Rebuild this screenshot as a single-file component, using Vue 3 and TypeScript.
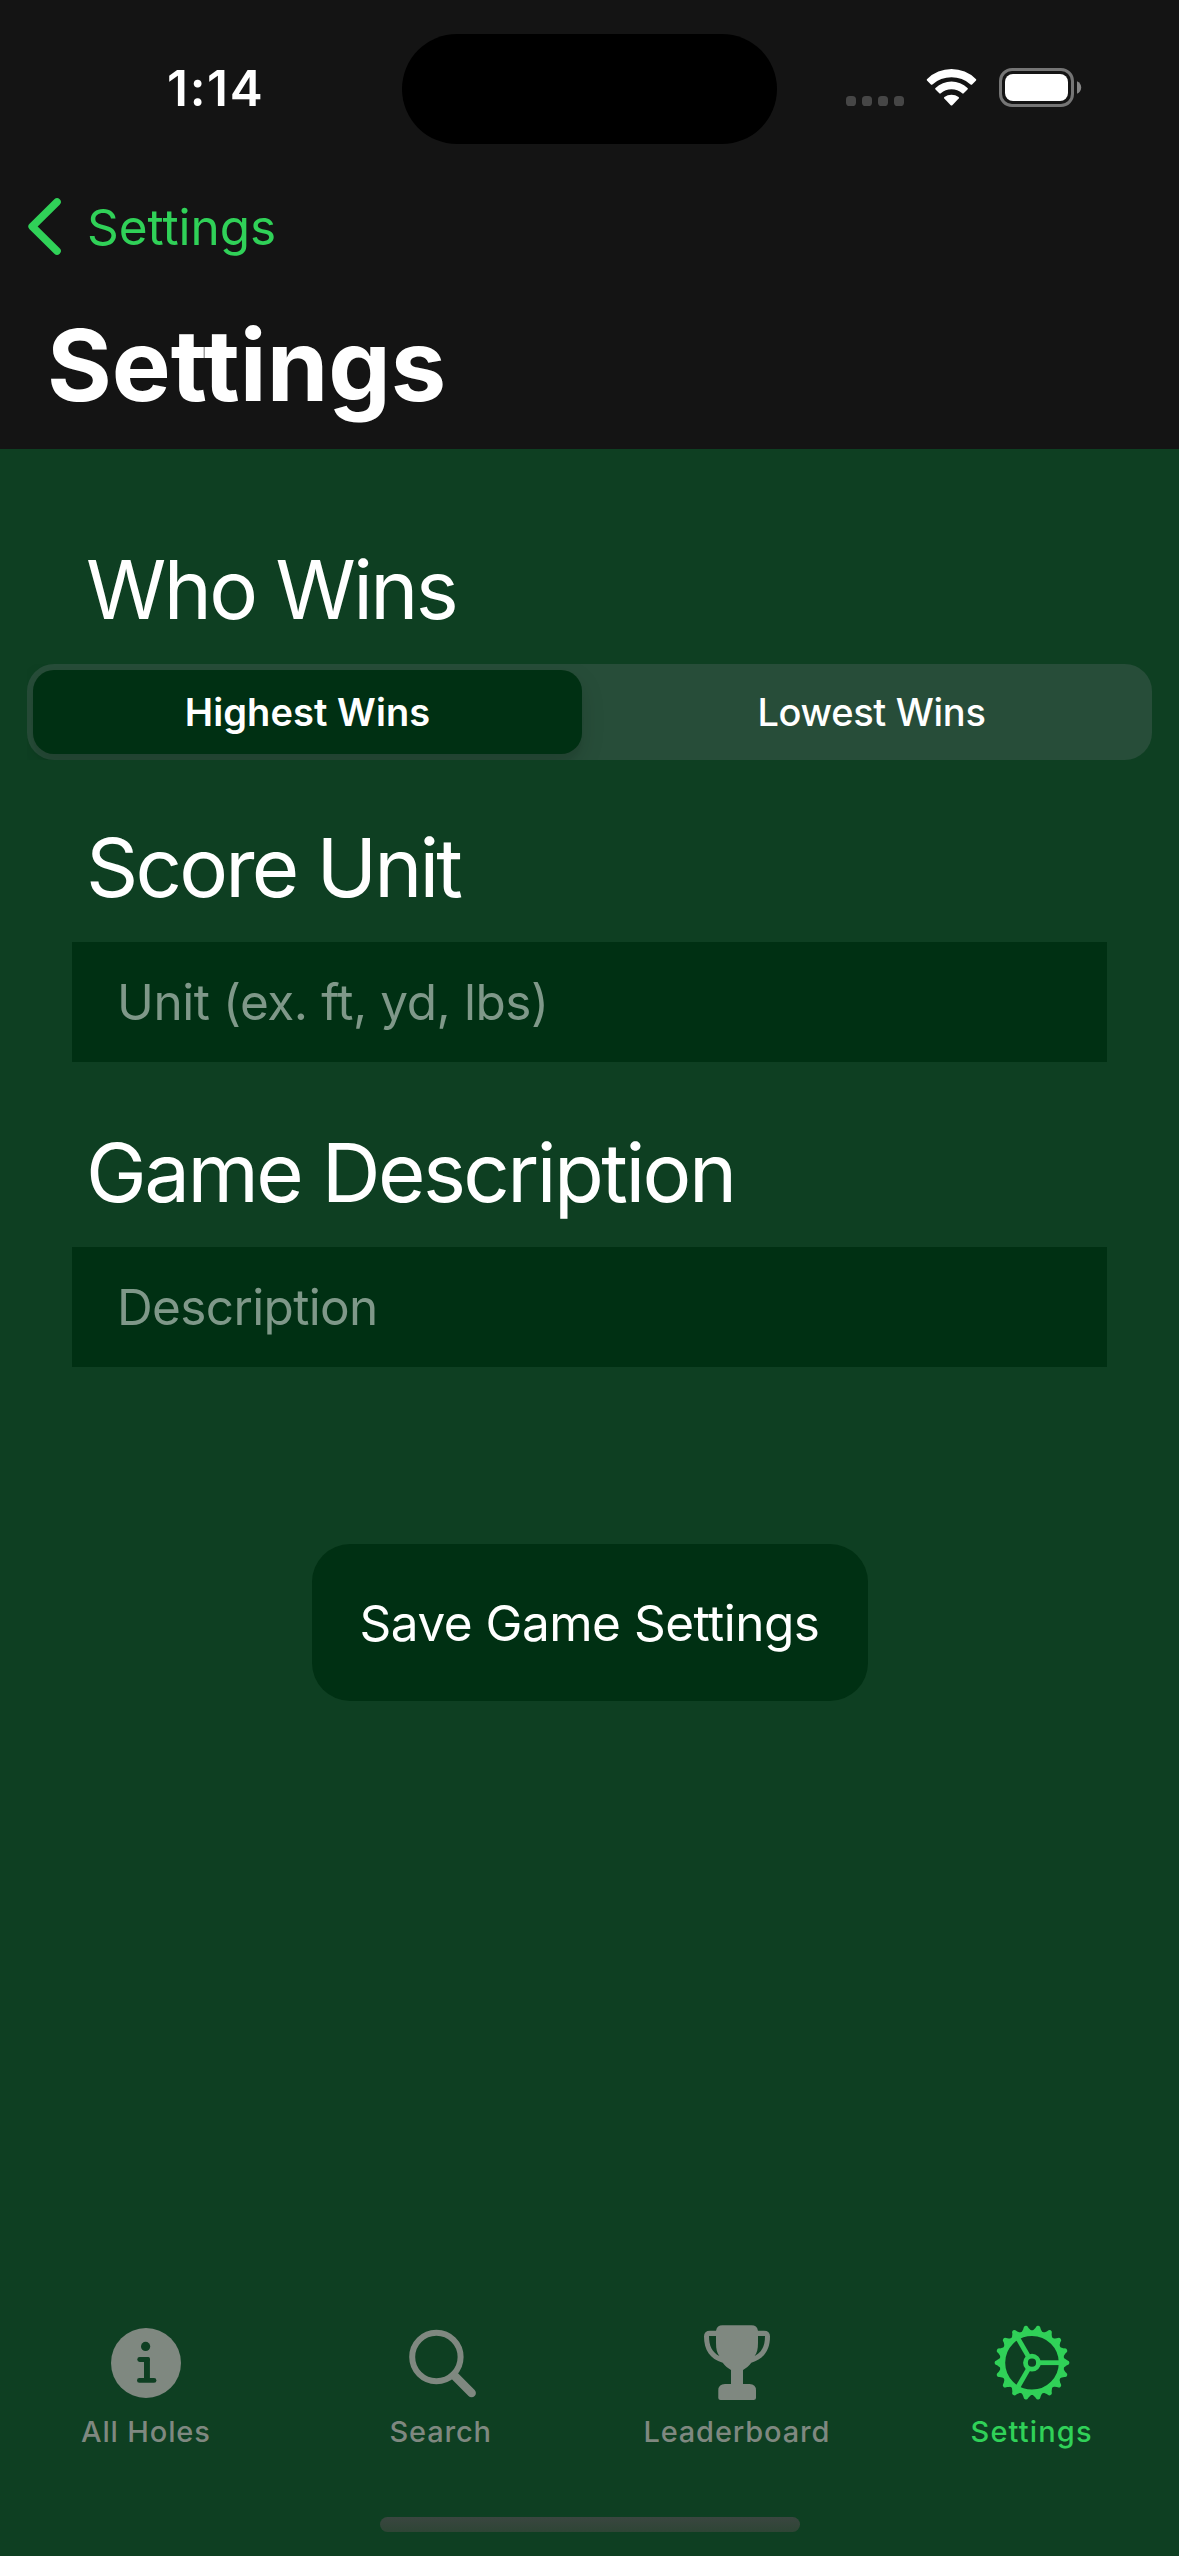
<script setup lang="ts">
import { ref } from 'vue'

interface Tab {
  id: 'info' | 'search' | 'trophy' | 'gear'
  label: string
}

const tabs: Tab[] = [
  { id: 'info', label: 'All Holes' },
  { id: 'search', label: 'Search' },
  { id: 'trophy', label: 'Leaderboard' },
  { id: 'gear', label: 'Settings' },
]
const winModes = ['Highest Wins', 'Lowest Wins']

const activeTab = ref<Tab['id']>('gear')
const winMode = ref(0)
const unit = ref('')
const description = ref('')

const teeth = Array.from({ length: 18 }, (_, i) => i * 20)
const spokes = [0, 120, 240]
</script>

<template>
  <div class="screen">
    <header class="header">
      <div class="status">
        <div class="clock">1:14</div>
        <div class="island"></div>
        <div class="indicators">
          <svg class="dots" width="58" height="40" viewBox="0 0 58 40">
            <rect v-for="n in 4" :key="n" :x="(n - 1) * 16" y="28" width="10" height="10" rx="3.6" />
          </svg>
          <svg class="wifi" width="51" height="40" viewBox="0 0 51 40">
            <path d="M1.2 12.7Q0.2 11.8 1.2 10.9A34.6 34.6 0 0 1 49.8 10.9Q50.8 11.8 49.8 12.7L46.1 16.4Q45.4 17.1 44.6 16.4A29 29 0 0 0 6.4 16.4Q5.6 17.1 4.9 16.4Z" />
            <path d="M9.5 21.6Q8.6 20.7 9.5 19.9A23.5 23.5 0 0 1 41.5 19.9Q42.4 20.7 41.5 21.6L37.7 25.3Q37 26 36.2 25.3A16.4 16.4 0 0 0 14.8 25.3Q14 26 13.3 25.3Z" />
            <path d="M18.3 30.6Q17.6 29.8 18.4 29.1A11.5 11.5 0 0 1 32.6 29.1Q33.4 29.8 32.7 30.6L26.3 37.2Q25.5 38 24.7 37.2Z" />
          </svg>
          <svg class="battery" width="83" height="40" viewBox="0 0 83 40">
            <rect x="1.5" y="1.5" width="72" height="36" rx="11.5" fill="none" stroke="#757575" stroke-width="3" />
            <rect x="6" y="6" width="63" height="27" rx="8" fill="#fff" />
            <path d="M78 13.2C80.6 14.3 82.2 16.6 82.2 19.5S80.6 24.7 78 25.8Z" fill="#858585" />
          </svg>
        </div>
      </div>
      <div class="nav">
        <svg class="chevron" width="36" height="60" viewBox="0 0 36 60">
          <path d="M30 5L5.2 29.5L30 54" />
        </svg>
        <span class="back">Settings</span>
      </div>
      <h1 class="title">Settings</h1>
    </header>

    <main class="form">
      <h2 class="heading who">Who Wins</h2>
      <div class="segmented">
        <div
          v-for="(mode, i) in winModes"
          :key="mode"
          class="segment"
          :class="{ selected: winMode === i }"
          @click="winMode = i"
        >
          {{ mode }}
        </div>
      </div>

      <h2 class="heading score">Score Unit</h2>
      <input v-model="unit" class="field unit" type="text" placeholder="Unit (ex. ft, yd, lbs)" />

      <h2 class="heading game">Game Description</h2>
      <input v-model="description" class="field" type="text" placeholder="Description" />

      <button class="save" type="button">Save Game Settings</button>
    </main>

    <footer class="footer">
      <nav class="tabs">
        <div
          v-for="tab in tabs"
          :key="tab.id"
          class="tab"
          :class="[tab.id, { active: tab.id === activeTab }]"
          @click="activeTab = tab.id"
        >
          <svg v-if="tab.id === 'info'" width="80" height="80" viewBox="0 0 80 80">
            <circle cx="40" cy="40" r="35" fill="currentColor" />
            <g class="cutout">
              <circle cx="39.6" cy="23.4" r="4.6" />
              <rect x="31.3" y="34" width="12.6" height="4.9" rx="2.4" />
              <path d="M38 34H41.6Q43.9 34 43.9 36.3V58H38Z" />
              <rect x="31" y="55" width="19.4" height="4.8" rx="2.4" />
            </g>
          </svg>
          <svg v-else-if="tab.id === 'search'" width="80" height="80" viewBox="0 0 80 80">
            <circle cx="35.4" cy="34" r="24.2" fill="none" stroke="currentColor" stroke-width="6" />
            <path d="M53.2 52.4L70.6 70" fill="none" stroke="currentColor" stroke-width="8.6" stroke-linecap="round" />
          </svg>
          <svg v-else-if="tab.id === 'trophy'" width="80" height="80" viewBox="0 0 80 80">
            <path
              fill="currentColor"
              fill-rule="evenodd"
              d="M19 7.7H13Q7 7.7 7 13.5C7 27 13 36 25.7 39.7C28 43 31 45 34 47V61H28Q21.3 61 21.3 67.5V75Q21.3 77 23.5 77H56.5Q59 77 59 75V67.5Q59 61 52.5 61H46V47C49 45 52 43 54.3 39.7C67 36 73 27 73 13.5Q73 7.7 67 7.7H61Q60 2.3 54.5 2.3H25.5Q20 2.3 19 7.7ZM12 13H19V20C19 26 20 30 22.3 33C15 29 12 23 12 13ZM68 13H61V20C61 26 60 30 57.7 33C65 29 68 23 68 13Z"
            />
          </svg>
          <svg v-else width="80" height="80" viewBox="-40 -39.7 80 80">
            <path
              v-for="a in teeth"
              :key="a"
              fill="currentColor"
              d="M30 -5.6C33 -4.6 34 -2.6 35.6 -2.3Q37.4 -1.8 37.4 0T35.6 2.3C34 2.6 33 4.6 30 5.6Z"
              :transform="`rotate(${a})`"
            />
            <circle r="29.6" fill="none" stroke="currentColor" stroke-width="5.6" />
            <circle r="6.5" fill="none" stroke="currentColor" stroke-width="4.8" />
            <path
              v-for="a in spokes"
              :key="'s' + a"
              d="M8 0H28"
              fill="none"
              stroke="currentColor"
              stroke-width="4.8"
              :transform="`rotate(${a})`"
            />
          </svg>
          <span class="label">{{ tab.label }}</span>
        </div>
      </nav>
      <div class="home"></div>
    </footer>
  </div>
</template>

<style>
body {
  margin: 0;
  background: #0e3f22;
}
</style>

<style scoped>
.screen {
  display: flex;
  flex-direction: column;
  width: 1179px;
  height: 2556px;
  overflow: hidden;
  background: #0e3f22;
  color: #fff;
  font-family: Inter, "Liberation Sans", sans-serif;
  font-variant-ligatures: none;
}

.header {
  height: 449px;
  background: #141414;
}

.status {
  display: grid;
  grid-template-columns: 402px 375px 402px;
  align-items: center;
  height: 177px;
}

.clock {
  padding: 0 0 2px 167px;
  font-size: 49.5px;
  font-weight: 600;
  line-height: 60px;
  letter-spacing: 1.7px;
}

.island {
  height: 110px;
  border-radius: 55px;
  background: #000;
}

.indicators {
  display: flex;
  padding: 0 0 1px 69px;
}

.dots {
  fill: #464646;
}

.wifi {
  margin-left: 22px;
  fill: #fff;
}

.battery {
  margin-left: 22px;
}

.nav {
  display: flex;
  align-items: center;
  height: 100px;
  padding-left: 27px;
  color: #30d158;
}

.chevron path {
  fill: none;
  stroke: currentColor;
  stroke-width: 7.6;
  stroke-linecap: round;
  stroke-linejoin: round;
}

.back {
  margin-left: 24px;
  font-size: 49.5px;
  line-height: 60px;
  letter-spacing: -0.05px;
}

.title {
  margin: 0;
  padding: 28px 0 0 47px;
  font-size: 99px;
  font-weight: 700;
  line-height: 120px;
}

.form {
  display: flex;
  flex-direction: column;
  padding-top: 90px;
}

.heading {
  margin: 0 0 24px 86px;
  font-size: 81.5px;
  font-weight: 400;
  line-height: 101px;
}

.who {
  letter-spacing: -2.68px;
}

.score {
  margin-top: 57px;
  letter-spacing: -2.85px;
}

.game {
  margin-top: 60px;
  letter-spacing: -2.55px;
}

.segmented {
  display: flex;
  box-sizing: border-box;
  height: 96px;
  margin: 0 27px;
  padding: 6px;
  border-radius: 27px;
  background: #274d39;
}

.segment {
  flex: 0 0 549px;
  margin-left: 15px;
  border-radius: 21px;
  font-size: 38px;
  font-weight: 500;
  line-height: 84px;
  letter-spacing: -0.31px;
  text-align: center;
}

.segment:first-child {
  margin-left: 0;
}

.segment.selected {
  background: #003013;
  box-shadow: 0 9px 24px rgba(0, 0, 0, 0.12), 0 9px 3px rgba(0, 0, 0, 0.04);
  clip-path: inset(-6px -40px -6px -6px);
  font-weight: 600;
  letter-spacing: 0.08px;
}

.field {
  box-sizing: border-box;
  height: 120px;
  margin: 0 72px;
  padding: 0 45px;
  border: 0;
  border-radius: 0;
  outline: 0;
  background: #003013;
  color: #fff;
  font-family: inherit;
  font-size: 49.5px;
  font-variant-ligatures: none;
  letter-spacing: -0.65px;
}

.field.unit {
  letter-spacing: -0.45px;
}

.field::placeholder {
  color: #7f9889;
  opacity: 1;
}

.save {
  align-self: center;
  width: 556px;
  height: 157px;
  margin-top: 177px;
  padding: 0;
  border: 0;
  border-radius: 38px;
  background: #003013;
  color: #fff;
  font-family: inherit;
  font-size: 49.5px;
  font-variant-ligatures: none;
  letter-spacing: -0.5px;
}

.footer {
  display: flex;
  flex-direction: column;
  align-items: center;
  margin-top: auto;
  padding-bottom: 24px;
}

.tabs {
  display: flex;
  width: 100%;
}

.tab {
  display: flex;
  box-sizing: border-box;
  flex: 0 0 25%;
  flex-direction: column;
  align-items: center;
  color: #7f8880;
}

.tab.active {
  color: #30d158;
}

.tab.info,
.tab.search {
  padding-right: 3px;
}

.cutout {
  fill: #0e3f22;
}

.label {
  margin-top: 10px;
  font-size: 29px;
  font-weight: 500;
  line-height: 37px;
  letter-spacing: 0.85px;
}

.active .label {
  letter-spacing: 1.13px;
}

.home {
  width: 420px;
  height: 15px;
  margin-top: 67px;
  border-radius: 7.5px;
  background: linear-gradient(#3a4640, #2e4535);
}
</style>
